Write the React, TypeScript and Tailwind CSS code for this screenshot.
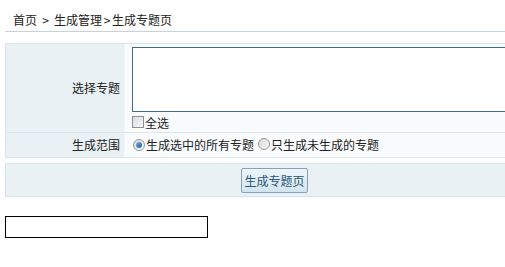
const font = { fontFamily: '"Noto Sans CJK SC", "Liberation Sans", sans-serif' }

function Checkbox() {
  return (
    <span className="inline-block w-[12px] h-[12px] border border-[#8f8f8f] bg-gradient-to-br from-[#dcdcdc] to-[#f8f8f8] shrink-0" />
  )
}

function Radio({ checked }: { checked?: boolean }) {
  return (
    <span className="inline-flex items-center justify-center w-[12px] h-[12px] rounded-full border border-[#9a9a9a] bg-gradient-to-br from-[#d8d8d8] to-[#fafafa] shrink-0">
      {checked && (
        <span className="w-[6px] h-[6px] rounded-full bg-gradient-to-br from-[#6cb2e6] to-[#1b5f9c]" />
      )}
    </span>
  )
}

export default function App() {
  return (
    <div className="w-full min-h-[267px] overflow-hidden bg-white text-[12px] text-[#222]" style={font}>
      <div className="flex ml-[5px] pl-[8px] pt-[12px] h-[32px] leading-[16px] border-b border-[#c4d3de]">
        <span>首页</span>
        <span className="w-[17px] text-center">&gt;</span>
        <span>生成管理</span>
        <span className="w-[10px] text-center">&gt;</span>
        <span>生成专题页</span>
      </div>

      <div className="mt-[11px] ml-[5px] w-[539px] border border-[#d9e5ec]">
        <div className="flex border-b border-[#d9e5ec]">
          <div className="w-[119px] shrink-0 flex items-center justify-end pr-[4px] bg-[#e9f1f5] border-r border-[#f3f7fa]">
            选择专题
          </div>
          <div className="flex-1 pl-[7px] pt-[3px] bg-[#f9fbfc]">
            <div className="w-[420px] h-[65px] border border-[#3f6a8a] bg-white" />
            <div className="flex items-center h-[20px] leading-[14px]">
              <Checkbox />
              <span className="ml-[1px] mt-[2px]">全选</span>
            </div>
          </div>
        </div>
        <div className="flex h-[24px]">
          <div className="w-[119px] shrink-0 flex items-center justify-end pr-[4px] bg-[#e9f1f5] border-r border-[#f3f7fa]">
            生成范围
          </div>
          <div className="flex-1 flex items-center pl-[8px] bg-[#f9fbfc]">
            <Radio checked />
            <span className="ml-[1px]">生成选中的所有专题</span>
            <span className="ml-[4px]">
              <Radio />
            </span>
            <span className="ml-[1px]">只生成未生成的专题</span>
          </div>
        </div>
      </div>

      <div className="mt-[5px] ml-[5px] w-[539px] h-[34px] flex items-center justify-center bg-[#e9f1f5] border border-[#d6e3eb]">
        <button className="h-[25px] w-[67px] rounded-[2px] border border-[#7fa3bb] bg-gradient-to-b from-[#eef5f9] to-[#d3e4ee] text-[#2d5673] text-[12px] leading-[23px]" style={font}>
          生成专题页
        </button>
      </div>

      <div className="mt-[19px] ml-[5px] w-[203px] h-[22px] border border-black" />
    </div>
  )
}
